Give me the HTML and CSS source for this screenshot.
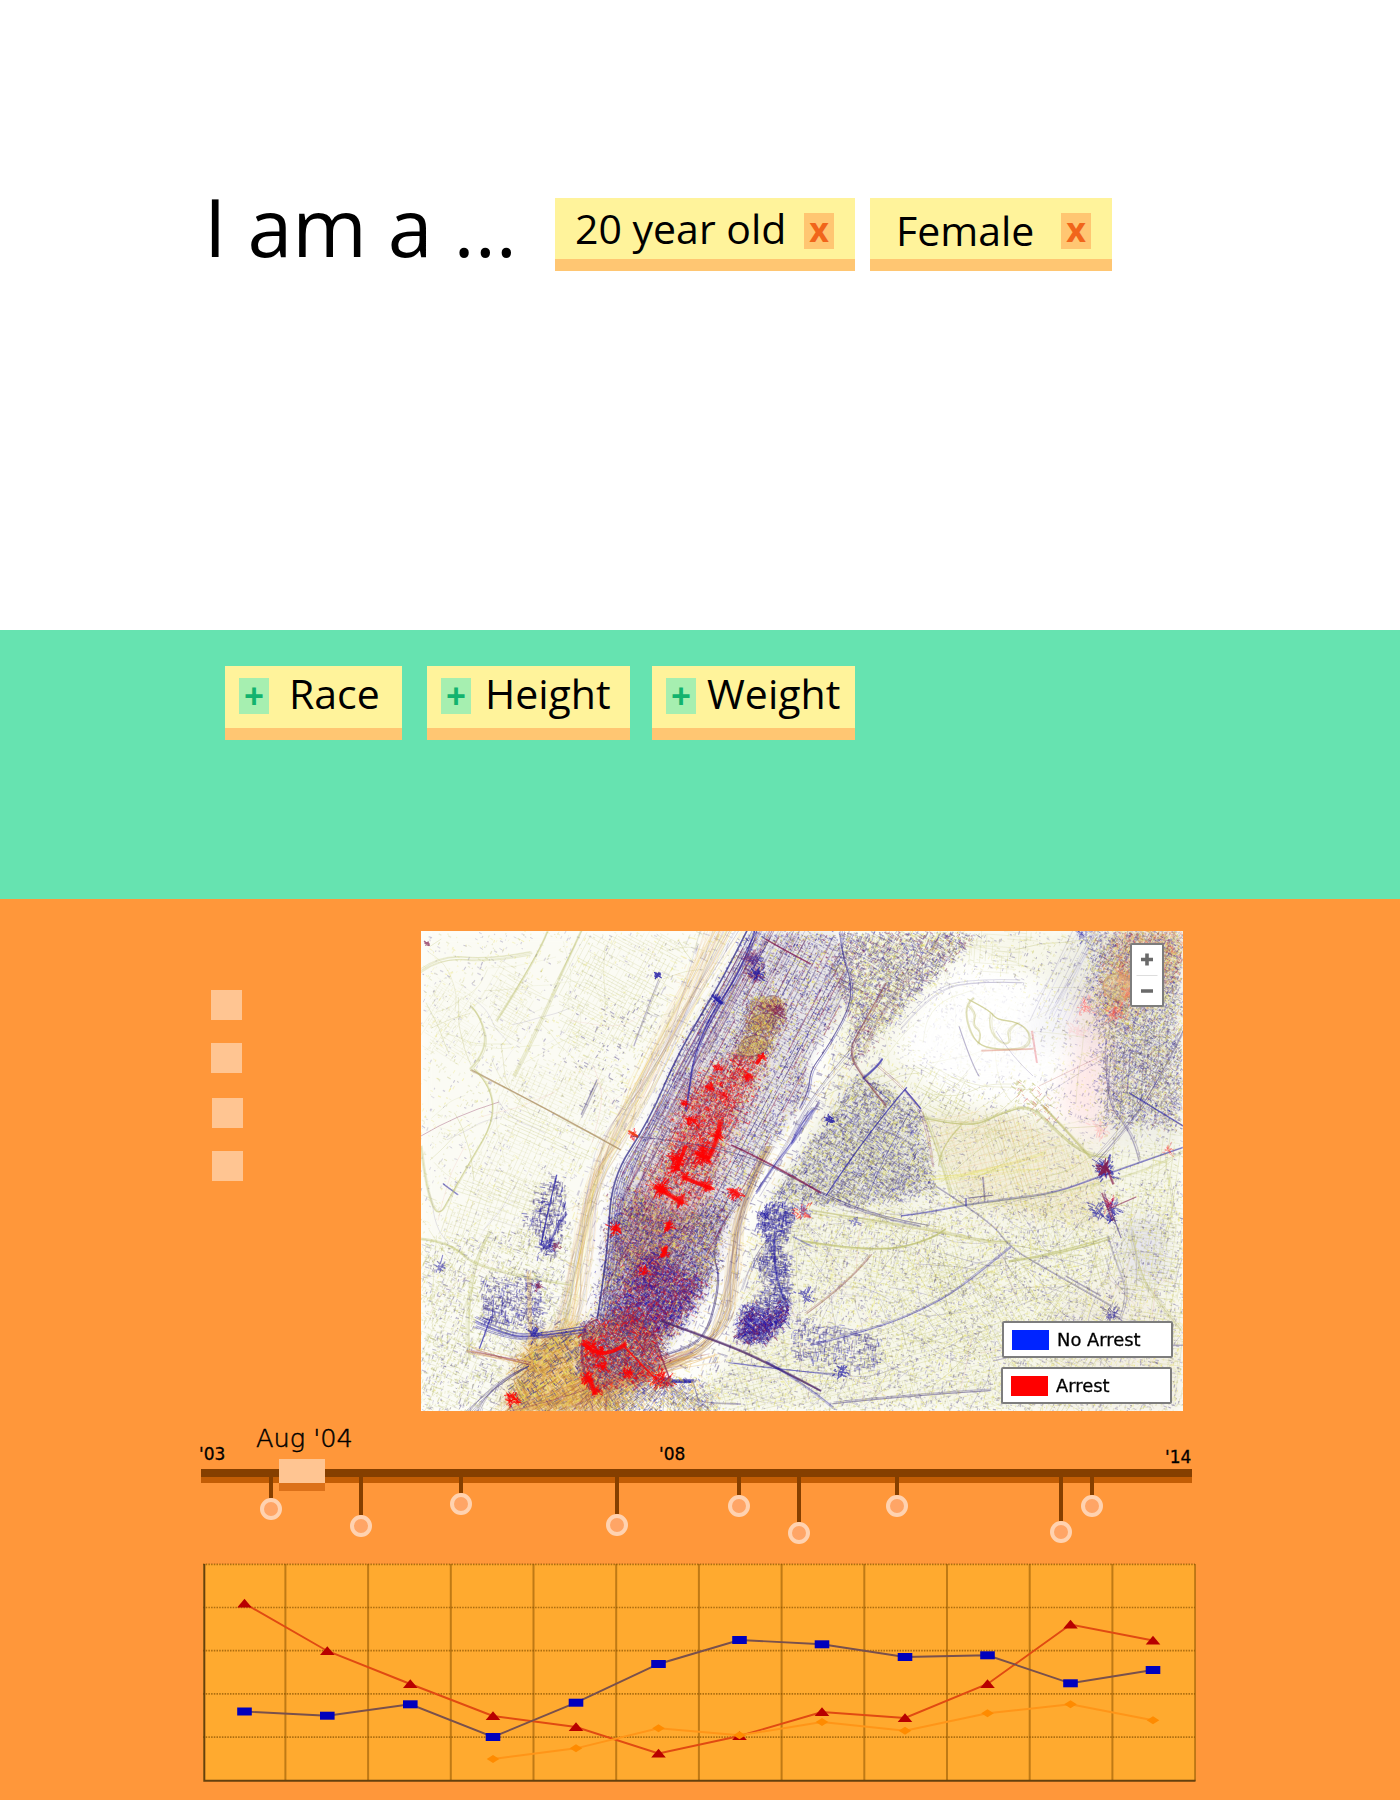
FILE: index.html
```html
<!DOCTYPE html>
<html lang="en">
<head>
<meta charset="utf-8">
<title>I am a ...</title>
<link rel="stylesheet" href="styles.css">
</head>
<body>
<section class="hero">
  <h1 class="title">I am a ...</h1>
  <div class="tag tag-age"><span class="tag-label">20 year old</span><button class="remove">x</button></div>
  <div class="tag tag-sex"><span class="tag-label">Female</span><button class="remove">x</button></div>
</section>
<section class="options">
  <div class="tag option race"><button class="add">+</button><span class="tag-label">Race</span></div>
  <div class="tag option height"><button class="add">+</button><span class="tag-label">Height</span></div>
  <div class="tag option weight"><button class="add">+</button><span class="tag-label">Weight</span></div>
</section>
<section class="explore">
  <div class="explore-top">
    <div class="filters"><i></i><i></i><i class="inset"></i><i class="inset"></i></div>
    <div class="map">
      <canvas id="map" width="762" height="480"></canvas>
      <div class="zoom">
        <svg width="29" height="60" viewBox="0 0 29 60"><path d="M9 14.5h12M15 8.500v12M9 46h12" stroke="#6a6a6a" stroke-width="3.600"/><path d="M4.500 30.500h21" stroke="#ddd"/></svg>
      </div>
      <div class="legend">
        <div class="key"><i class="swatch blue"></i>No Arrest</div>
        <div class="key second"><i class="swatch red"></i>Arrest</div>
      </div>
    </div>
  </div>
  <div class="years">
    <span class="y03">'03</span><span class="current">Aug '04</span><span class="y08">'08</span><span class="y14">'14</span>
  </div>
  <div class="timeline">
    <div class="pin" style="left:59px;height:43px"></div>
    <div class="pin" style="left:149px;height:60px"></div>
    <div class="pin" style="left:249px;height:38px"></div>
    <div class="pin" style="left:405px;height:59px"></div>
    <div class="pin" style="left:527px;height:40px"></div>
    <div class="pin" style="left:587px;height:67px"></div>
    <div class="pin" style="left:685px;height:40px"></div>
    <div class="pin" style="left:849px;height:66px"></div>
    <div class="pin" style="left:880px;height:40px"></div>
    <div class="handle"></div>
  </div>
  <svg class="chart" id="chart" width="994" height="219" viewBox="202 1563 994 219"></svg>
</section>
<script src="chart.js"></script>
<script src="map.js"></script>
</body>
</html>
```
FILE: styles.css
```css
*, *::after { box-sizing: border-box; }
body { margin: 0; width: 1400px; background: #fff; color: #000; font-family: "Open Sans", sans-serif; }
button { border: 0; padding: 0; font-family: "Open Sans", sans-serif; font-weight: 700; }

.hero { display: flex; align-items: flex-start; height: 630px; padding: 190px 0 0 204px; }
.title { margin: 0; width: 351px; font-size: 80.600px; font-weight: 400; line-height: 73px; white-space: nowrap; }

.tag { display: flex; align-items: flex-start; height: 73px; background: #fff39b; border-bottom: 12px solid #ffc672; }
.tag-label { font-size: 41px; line-height: 61px; white-space: nowrap; }
.hero .tag { margin-top: 8px; justify-content: space-between; padding: 0 21px 0 20px; }
.hero .tag-age { width: 300px; }
.hero .tag-sex { width: 242px; margin-left: 15px; padding-left: 26px; }
.tag-sex .tag-label { padding-top: 2px; }
.remove, .add { flex: none; width: 30px; height: 36px; }
.remove { margin-top: 15px; background: #ffc672; color: #f1651b; font-size: 34px; line-height: 26px; padding-bottom: 5px; }

.options { display: flex; align-items: flex-start; height: 269px; padding: 36px 0 0 225px; background: #66e3b0; }
.option { height: 74px; padding-left: 14px; }
.option .tag-label { line-height: 55px; }
.add { margin-top: 12px; background: #a6efb0; color: #12b36e; font-size: 35px; line-height: 36px; }
.race { width: 177px; }
.race .tag-label { margin-left: 20px; }
.height { width: 203px; margin-left: 25px; }
.height .tag-label { margin-left: 14px; }
.weight { width: 203px; margin-left: 22px; }
.weight .tag-label { margin-left: 11px; }

.explore { height: 901px; padding-top: 32px; background: #ff973a; font-family: "DejaVu Sans", sans-serif; }
.explore-top { display: flex; height: 480px; }
.filters { width: 421px; padding: 59px 0 0 211px; }
.filters i { display: block; width: 31px; height: 30px; margin-bottom: 23px; background: #ffc592; }
.filters i:nth-child(2) { margin-bottom: 25px; }
.filters .inset { margin-left: 1px; }

.map { position: relative; width: 762px; height: 480px; background: #fefefb; }
.map canvas { display: block; }
.zoom { position: absolute; left: 709px; top: 12px; width: 34px; height: 64px; background: #fff; border: 2px solid #7d7d7d; border-radius: 2px; }
.zoom svg { display: block; }
.legend { position: absolute; left: 580px; top: 390px; }
.key { display: flex; align-items: center; width: 171px; height: 37px; margin-left: 1px; padding-left: 8px; background: #fff; border: 2px solid #7d7d7d; border-radius: 2px; font-size: 17.900px; -webkit-text-stroke: .3px #000; }
.key.second { margin: 9px 0 0; }
.swatch { width: 37px; height: 20px; margin-right: 8px; }
.blue { background: #0024ff; }
.red { background: #f00; }

.years { display: flex; align-items: flex-start; height: 58px; padding: 12px 0 0 199px; font-size: 17px; line-height: 20px; white-space: nowrap; -webkit-text-stroke: .3px #000; }
.y03 { width: 57px; padding-top: 21px; }
.current { width: 403px; font-size: 25.600px; font-weight: 200; line-height: 30px; -webkit-text-stroke: .5px #000; }
.y08 { width: 506px; padding-top: 21px; }
.y14 { padding-top: 24px; }

.timeline { position: relative; width: 991px; height: 14px; margin-left: 201px; background: #c25d05; border-top: 8px solid #853f00; }
.pin { position: absolute; top: 0; width: 22px; border-bottom: 22px solid transparent; background: linear-gradient(#853f00, #853f00) 9px 0 / 4px 100% no-repeat padding-box; }
.pin::after { content: ""; position: absolute; left: 0; top: 100%; width: 22px; height: 22px; border: 4px solid #ffd2b0; border-radius: 50%; background: #ffa566; }
.handle { position: absolute; left: 78px; top: -18px; width: 46px; height: 32px; background: #ffc592; border-bottom: 8px solid #dc7119; }

.chart { display: block; margin: 80px 0 0 202px; }
.panel { fill: #ffaa2f; }
.grid-x { stroke: #8a5200; stroke-opacity: .55; stroke-width: 2; }
.grid-y { stroke: #8a5200; stroke-opacity: .7; stroke-dasharray: 1.500 1.200; stroke-width: 1.700; }
.axis { fill: none; stroke: #65400e; stroke-width: 2; }
.series { fill: none; stroke-width: 1.900; }
.s-red { stroke: #e04a12; }
.s-blue { stroke: #79504c; }
.s-amber { stroke: #ff9518; }
.m-red { fill: #b80000; }
.m-blue { fill: #0000bd; }
.m-amber { fill: #ff8b00; }
```
FILE: chart.js
```js
// Trend chart
(function () {
  const xs = [244.5, 327.3, 410.3, 493, 576, 658.5, 739.5, 822, 905, 987.5, 1070.5, 1153];
  const red = [1603.5, 1651, 1684, 1716, 1727, 1753.5, 1736, 1712, 1718, 1684, 1624.5, 1640.5];
  const blue = [1711.5, 1715.7, 1704.3, 1737, 1702.7, 1664, 1640, 1644.3, 1657, 1655.3, 1683.3, 1670];
  const amber = [null, null, null, 1759, 1748.3, 1728.3, 1735.3, 1722, 1730.7, 1713.3, 1704.3, 1720.3];
  let g = '<rect class="panel" x="203" y="1564" width="992.5" height="217"/>';
  for (let i = 1; i <= 12; i++) { const x = 202.7 + i * 82.7; g += `<path class="grid-x" d="M${x} 1564V1781"/>`; }
  for (let i = 0; i < 5; i++) { const y = 1564.3 + i * 43.2; g += `<path class="grid-y" d="M203 ${y}H1195"/>`; }
  g += '<path class="axis" d="M204.3 1564V1780.7H1195.5"/>';
  function series(ys, name, mark) {
    const pts = xs.map((x, i) => [x, ys[i]]).filter(p => p[1] !== null);
    g += `<polyline class="series s-${name}" points="${pts.map(p => p.join(',')).join(' ')}"/>`;
    pts.forEach(([x, y]) => { g += `<path class="m-${name}" d="M${x} ${y}${mark}"/>`; });
  }
  series(red, 'red', 'm0-4.7l7.3 8.7h-14.6z');
  series(blue, 'blue', 'm-7.3-4h14.6v8h-14.6z');
  series(amber, 'amber', 'm0-4l6.3 4l-6.3 4l-6.3-4z');
  document.getElementById('chart').innerHTML = g;
})();
```
FILE: map.js
```js
// Map of stops: street grids, travelled roads and point density
(function () {
const c = document.getElementById('map').getContext('2d');
let seed = 41;
function rnd() { seed = (seed * 1664525 + 1013904223) % 4294967296; return seed / 4294967296; }
const sp = () => rnd() + rnd() - 1;
const B = '35,28,165', N = '75,62,130', Y = '228,220,70', O = '186,188,105', R = '255,0,0', M = '130,30,80', G = '228,172,75';
function trace(p) { c.beginPath(); p.forEach((q, i) => i ? c.lineTo(q[0], q[1]) : c.moveTo(q[0], q[1])); }
function curve(p) {
  if (p.length < 3) { trace(p); return; }
  c.beginPath(); c.moveTo(p[0][0], p[0][1]);
  for (let i = 1; i < p.length - 1; i++) {
    const a = p[i], b = p[i + 1], last = i === p.length - 2;
    c.quadraticCurveTo(a[0], a[1], last ? b[0] : (a[0] + b[0]) / 2, last ? b[1] : (a[1] + b[1]) / 2);
  }
}
// Short segments are collected per colour and stroked a few dozen at a time
const pool = {};
function flush(col) {
  const q = pool[col];
  if (!q || !q.s.length) return;
  c.beginPath();
  for (const s of q.s) { c.moveTo(s[0], s[1]); c.lineTo(s[2], s[3]); }
  c.strokeStyle = `rgba(${col},${q.a * (.5 + rnd() * .6)})`; c.lineWidth = q.w * (.8 + rnd() * .4); c.stroke();
  q.s = [];
}
function seg(col, a, w, x0, y0, x1, y1) {
  const q = pool[col] || (pool[col] = { s: [] });
  q.a = a; q.w = w; q.s.push([x0, y0, x1, y1]);
  if (q.s.length >= 36) flush(col);
}
function flushAll() { Object.keys(pool).forEach(flush); }
// A road is a bundle of thin tracks that wander round the same line
function road(p, col, a, w, n = 1, spread = 0) {
  const m = n + (w > 1.2 ? 1 : 0), f = w > 1.2 ? .62 : .8;
  for (let k = 0; k < m; k++) {
    const s = spread || (w > 1.2 ? .6 : 0), dx = sp() * s, dy = sp() * s;
    curve(p.map(q => [q[0] + dx + sp() * s * .5, q[1] + dy + sp() * s * .5]));
    c.strokeStyle = `rgba(${col},${a * f})`; c.lineWidth = w * .75; c.stroke();
  }
}
function inside(p, x, y) {
  let r = false;
  for (let i = 0, j = p.length - 1; i < p.length; j = i++)
    if ((p[i][1] > y) !== (p[j][1] > y) && x < (p[j][0] - p[i][0]) * (y - p[i][1]) / (p[j][1] - p[i][1]) + p[i][0]) r = !r;
  return r;
}
function box(p) {
  const X = p.map(q => q[0]), Z = p.map(q => q[1]);
  return [Math.min(...X), Math.min(...Z), Math.max(...X), Math.max(...Z)];
}
function tint(p, col, a, blur = 8) { c.save(); c.filter = `blur(${blur}px)`; trace(p); c.closePath(); c.fillStyle = `rgba(${col},${a})`; c.fill(); c.restore(); }
function hatch(p, deg, gap, col, a, w = .7, broken = .25) {
  const [x0, y0, x1, y1] = box(p), L = Math.hypot(x1 - x0, y1 - y0) / 2, mx = (x0 + x1) / 2, my = (y0 + y1) / 2;
  const t = deg * Math.PI / 180, cs = Math.cos(t), sn = Math.sin(t);
  for (let v = -L; v < L; v += gap * (.8 + rnd() * .4)) {
    for (let u = -L; u < L;) {
      const l = 8 + rnd() * 22, X = mx + u * cs - v * sn, Z = my + u * sn + v * cs;
      if (rnd() > broken && inside(p, X, Z) && inside(p, X + l * .7 * cs, Z + l * .7 * sn)) seg(col, a, w, X, Z, X + l * cs, Z + l * sn + sp() * .6);
      u += l;
    }
  }
  flushAll();
}
function grid(p, deg, gap, col, a, w) { hatch(p, deg, gap, col, a, w); hatch(p, deg + 90, gap * 1.4, col, a, w); }
// Speck edges are feathered so that neighbouring densities run into each other
function specks(p, n, cols, deg, len, a, soft = 7) {
  const [x0, y0, x1, y1] = box(p);
  for (let i = 0; i < n; i++) {
    const x = x0 + rnd() * (x1 - x0), y = y0 + rnd() * (y1 - y0);
    if (!inside(p, x + sp() * soft, y + sp() * soft)) continue;
    const t = (deg + (rnd() < .5 ? 90 : 0) + sp() * 10) * Math.PI / 180, l = len * (.3 + rnd());
    seg(cols[Math.floor(rnd() * cols.length)], a, 1.1, x, y, x + Math.cos(t) * l, y + Math.sin(t) * l);
  }
  flushAll();
}
function blob(x, y, r, col, n, a = .8) {
  for (let i = 0; i < n * .6; i++) {
    const t = (28 + Math.floor(rnd() * 4) * 90 + sp() * 25) * Math.PI / 180, d = r * .9 * rnd() * rnd(), l = 1 + rnd() * r * .4;
    const X = x + Math.cos(t) * d + sp() * r * .45, Z = y + Math.sin(t) * d + sp() * r * .45;
    seg(col, a, 1.1, X, Z, X + Math.cos(t) * l, Z + Math.sin(t) * l);
  }
  flushAll();
}
function tangle(p, n, col, a, len) {
  const [x0, y0, x1, y1] = box(p);
  for (let i = 0; i < n; i++) {
    let x = x0 + rnd() * (x1 - x0), y = y0 + rnd() * (y1 - y0), t = rnd() * 6.28; const q = [[x, y]];
    for (let k = 0; k < 5; k++) { t += sp() * .5; x += Math.cos(t) * len / 5; y += Math.sin(t) * len / 5; if (inside(p, x, y)) q.push([x, y]); else break; }
    if (q.length > 1) road(q, col, a * (.3 + rnd()), .9);
  }
}

const all = [[0, 0], [762, 0], [762, 480], [0, 480]];
const jersey = [[0, 0], [300, 0], [250, 110], [205, 200], [180, 230], [165, 300], [150, 390], [100, 480], [0, 480]];
const jerseyS = [[0, 310], [150, 290], [150, 400], [90, 480], [0, 480]];
const hudson = [[265, 0], [325, 0], [240, 150], [192, 250], [176, 390], [110, 480], [80, 480], [140, 390], [158, 250], [195, 180]];
const east = [[430, 0], [762, 0], [762, 480], [240, 480], [300, 440], [335, 300], [380, 215], [410, 140], [420, 60]];
const eastRiver = [[390, 140], [410, 100], [440, 130], [400, 200], [345, 270], [340, 390], [300, 440], [250, 450], [262, 410], [300, 350], [300, 290], [330, 250]];
const queensW = [[385, 215], [440, 140], [500, 180], [515, 260], [430, 275], [345, 270]];
const south = [[350, 270], [762, 250], [762, 480], [250, 480], [320, 400]];
const queensMid = [[500, 185], [600, 175], [680, 230], [690, 300], [540, 275], [515, 210]];
const manhattan = [[328, 0], [305, 40], [262, 110], [240, 160], [222, 205], [192, 250], [187, 320], [176, 388], [163, 392], [158, 440], [175, 462], [205, 442], [262, 398], [290, 345], [300, 300], [325, 262], [350, 215], [388, 165], [388, 125], [415, 90], [430, 50], [415, 0]];
const midtown = [[322, 120], [348, 122], [325, 175], [305, 215], [290, 262], [258, 320], [225, 360], [195, 320], [222, 255], [248, 215], [270, 155]];
const downtown = [[190, 290], [215, 260], [255, 290], [310, 265], [292, 350], [250, 400], [228, 450], [160, 440], [165, 392], [180, 388]];
const harbor = [[170, 390], [108, 410], [82, 480], [190, 480], [225, 450], [190, 460], [160, 440], [163, 395]];
const bronx = [[420, 0], [560, 0], [500, 60], [450, 110], [430, 140], [428, 80], [410, 40]];
const ne = [[655, 0], [762, 0], [762, 210], [680, 215], [680, 120], [640, 110], [600, 120]];

tint(jersey, '220,223,170', .08); tint(east, '220,220,170', .2); tint(queensMid, '225,205,150', .2);
tint(queensW, '170,170,190', .15); tint(manhattan, '150,140,165', .22, 5);
tint([[560, 20], [520, 40], [470, 120], [520, 165], [640, 190], [680, 205], [690, 120], [640, 60]], '255,255,255', .9, 10);
tint([[665, 60], [690, 50], [690, 130], [680, 215], [640, 180], [650, 120]], '255,165,165', .24, 12);
tint([[690, 0], [762, 0], [750, 60], [690, 90]], '225,180,130', .35, 9);
tint([[700, 290], [740, 290], [745, 350], [705, 350]], '180,175,240', .25, 10);
tint([[640, 370], [700, 340], [762, 390], [762, 480], [620, 480]], '235,225,215', .3, 10);

// pale outer boroughs
grid([[0, 40], [70, 60], [55, 130], [0, 130]], 33, 3, O, .25);
grid([[80, 25], [120, 60], [95, 110], [70, 110], [60, 60]], 30, 3, O, .3);
grid([[160, 0], [270, 0], [225, 115], [140, 125], [130, 60]], 28, 3.3, O, .36);
grid([[80, 130], [200, 120], [185, 200], [130, 290], [40, 260], [75, 180]], 24, 3.6, O, .32);
grid([[20, 250], [150, 240], [130, 330], [20, 310]], 18, 4, O, .33);
grid(jerseyS, 25, 6, O, .25);
tangle(jersey, 90, O, .45, 70); tangle(jersey, 35, N, .22, 60); tangle(jersey, 20, '230,140,140', .25, 80);
grid(bronx, 30, 5, O, .35); grid(queensW, 32, 4.5, O, .4);
grid([[470, 118], [560, 150], [540, 190], [490, 175]], 28, 4, O, .4);
grid([[540, 0], [620, 0], [590, 45], [550, 40]], 4, 4, O, .33);
grid(queensMid, 70, 3.6, O, .38); grid(queensMid, 78, 5, '235,165,100', .25);
grid([[345, 275], [520, 275], [530, 350], [400, 360], [340, 330]], 10, 4, O, .36);
grid([[520, 285], [690, 295], [700, 370], [600, 330], [500, 390]], 75, 4, O, .36);
grid([[480, 330], [620, 330], [600, 420], [450, 410]], -28, 4, O, .36);
grid([[620, 340], [700, 360], [690, 480], [560, 480]], 30, 3.6, O, .4);
grid([[330, 400], [580, 390], [580, 480], [260, 480]], -15, 4.5, O, .36);
grid([[690, 220], [762, 190], [762, 480], [700, 420]], 8, 4, O, .38);
tangle(east, 200, O, .5, 80); tangle(south, 170, N, .35, 60); tangle(south, 80, Y, .4, 70); tangle(south, 50, '220,150,150', .35, 60);
specks(all, 5000, [O, Y, N, O], 28, 3, .25);
specks(east, 11000, [N, Y, O, N, O], 20, 3, .32);
specks(south, 9000, [O, N, Y], 12, 3, .36);
specks(jersey, 2600, [O, N, Y, O], 28, 3, .32);
specks(jerseyS, 2400, [N, O, O], 20, 4, .38);
specks(queensW, 8000, [B, N, Y, O, N], 30, 3.5, .42); specks(bronx, 7500, [B, N, Y, M, N, O], 28, 3.5, .42);
grid(queensW, 32, 12, N, .38); grid(bronx, 30, 10, N, .38); tangle(queensW, 30, N, .4, 60); tangle(bronx, 35, N, .4, 60);
tint([[555, 45], [510, 75], [485, 110], [520, 145], [620, 150], [660, 120], [610, 115], [620, 65]], '255,255,255', .75, 10);
road([[547, 68], [568, 78], [575, 88], [596, 90], [610, 102], [606, 117], [575, 118], [555, 112], [545, 90], [545, 72], [553, 66]], O, .5, 1.5, 2, 2);
road([[548, 75], [556, 82], [552, 95], [562, 102], [558, 113]], O, .5, 1.4, 2, 2);
road([[570, 82], [567, 98], [580, 113], [590, 112], [585, 98], [597, 92]], O, .45, 1.4, 2, 2);
road([[480, 95], [512, 57], [560, 48], [600, 50]], N, .3, 1.3, 2, 3); road([[538, 95], [550, 132], [558, 145]], N, .35, 1.5); road([[575, 100], [590, 125], [612, 145]], N, .3, 1.2);
road([[560, 120], [612, 118]], '220,130,110', .5, 1.3, 2, 1); road([[611, 100], [616, 132]], '230,100,110', .6, 1.4); road([[618, 155], [680, 125]], '190,110,110', .4, 1.2); road([[630, 160], [678, 130]], N, .3, 1);

// rivers with ferry tracks
specks(hudson, 2600, [Y, G, N, O, N], 112, 7, .28); specks(eastRiver, 2600, [N, G, N, Y], 112, 6, .36);
for (let i = 0; i < 60; i++) road([[300 + sp() * 26, 0], [235 + sp() * 26, 130], [195 + sp() * 20, 205], [172 + sp() * 12, 250], [161 + sp() * 16, 320], [150 + sp() * 20, 390], [125 + sp() * 32, 430], [100 + sp() * 34, 480]], [G, Y, '220,150,120', N, G][i % 5], .24, .9);
for (let i = 0; i < 45; i++) road([[348 + sp() * 8, 215], [318 + sp() * 11, 275], [312 + sp() * 14, 340], [305 + sp() * 14, 390], [280 + sp() * 15, 418], [235 + sp() * 18, 440], [150 + sp() * 55, 480]], i % 3 ? G : N, .28, .9);
road([[325, 260], [298, 295], [292, 325], [300, 345], [288, 400], [265, 418], [235, 425]], N, .65, 1.3, 3, 2);
tint(harbor, '222,155,35', .4, 9);
specks(harbor, 5000, [G, Y, '190,120,50', N, G], -35, 6, .6, 14);
for (let i = 0; i < 80; i++) road([[82 + rnd() * 105, 480], [135 + rnd() * 65, 455 + sp() * 8], [170 + rnd() * 130, 425 + sp() * 14]], [G, G, '215,150,40', M][i % 4], .45, .9);

// Manhattan
const mh = 118;
hatch(manhattan, mh, 6, N, .6, 1); hatch(manhattan, mh - 90, 3.4, N, .42, .8);
specks(manhattan, 24000, [B, N, Y, Y, N, '255,255,235', M], mh, 2.6, .5);
for (let i = 0; i < 22; i++) { const k = rnd() * 70; road([[330 + k, 0], [262 + k, 125], [200 + k * .9, 245], [188 + k * .9, 300]], i % 3 ? N : M, .4, .9); }
specks([[330, 65], [367, 75], [345, 130], [310, 130], [325, 100]], 3200, [G, N, Y, M, '190,140,70'], 118, 2.8, .5);
tint(midtown, '205,85,80', .2, 9);
specks(midtown, 11000, [R, '215,30,40', M, N, G, Y], mh, 2.8, .5, 14);
specks([[318, 125], [342, 125], [322, 165], [300, 210], [285, 235], [240, 252], [262, 190], [285, 150]], 4300, [R, '225,20,20', R, M], mh, 3, .55, 18);
tint(downtown, '75,40,145', .13, 10);
specks(downtown, 17000, [B, N, N, M, Y, G], mh, 2.8, .5, 15);
specks([[225, 320], [285, 355], [245, 405], [205, 400], [190, 380]], 5000, ['30,10,185', M, B, '200,10,40'], 30, 3.2, .5, 16);
specks([[165, 395], [215, 375], [245, 420], [228, 450], [175, 460], [158, 440]], 3600, [R, M, G, R, N, '120,60,90'], 38, 4, .55, 8);
hatch(manhattan, mh, 13, M, .5, 1.1);
for (let k = 0; k < 6; k++) road([[326 + k * 5, 0], [302 + k * 4, 48], [258 + k * 4, 120], [228 + k * 3, 190], [190 + k * 2, 248], [187 + k * 3, 320], [176 + k * 3, 388]], k < 2 ? '35,30,130' : B, .75 - k * .09, k ? 1 : 2);
road([[335, 0], [322, 40], [290, 85], [272, 130], [269, 160], [265, 180]], B, .75, 1.5, 2, 2);
road([[176, 388], [163, 390], [158, 435], [170, 460]], M, .7, 1.5, 2, 2);
[[332, 115, 15, 10], [341, 91, 14, 8], [350, 72, 10, 7]].forEach(([x, y, w, h]) => { c.beginPath(); c.ellipse(x, y, w, h, -.3, 0, 7); c.fillStyle = 'rgba(222,195,110,.35)'; c.fill(); c.strokeStyle = 'rgba(110,60,80,.45)'; c.lineWidth = 1.3; c.stroke(); specks([[x - 12, y - 7], [x + 12, y - 7], [x + 12, y + 7], [x - 12, y + 7]], 260, [N, G, Y, M], 30, 2.5, .5); });
[[341, 126, 5], [328, 145, 6], [296, 137, 6], [289, 157, 5], [303, 165, 6], [270, 189, 6], [264, 172, 5], [296, 205, 8], [281, 226, 11], [283, 217, 7], [256, 228, 10], [254, 237, 7], [241, 257, 9], [286, 255, 10], [264, 246, 6], [313, 262, 9], [260, 270, 8], [238, 258, 10], [248, 295, 7], [243, 321, 6], [223, 340, 6], [194, 298, 7], [170, 415, 10], [179, 423, 9], [181, 435, 8], [207, 442, 8], [166, 448, 9], [175, 459, 7], [238, 449, 13], [246, 450, 9], [92, 468, 9], [212, 203, 5]].forEach(q => blob(q[0], q[1], q[2], R, 15 * q[2]));
[[[299, 190], [296, 210], [287, 228]], [[265, 215], [256, 238]], [[235, 255], [262, 272]], [[262, 246], [290, 257]], [[249, 292], [245, 300]], [[244, 315], [242, 325]], [[274, 222], [288, 229]], [[339, 128], [336, 133]], [[328, 143], [325, 148]], [[162, 412], [180, 432], [205, 412]], [[168, 445], [174, 463]]].forEach(p => road(p, R, .8, 4.6, 2, 1.5));
road([[203, 415], [236, 449]], R, .8, 1.6, 2, 1); road([[208, 200], [217, 206]], '235,60,10', .8, 3);
blob(334, 45, 9, M, 100); blob(331, 28, 12, M, 160, .6); blob(334, 28, 12, B, 110, .5); blob(336, 44, 11, B, 100); blob(355, 80, 12, M, 130, .5); road([[291, 64], [301, 73]], B, .8, 3.5); blob(296, 68, 6, B, 60); blob(237, 44, 4, B, 60);
road([[345, 8], [365, 20], [390, 33]], M, .7, 1.6, 2, 1);

// bridges, expressways and local clusters
road([[50, 139], [110, 170], [165, 200], [200, 219]], '170,140,95', .7, 1.6, 2, 1);
road([[210, 205], [310, 214], [400, 262], [460, 286], [508, 294]], N, .5, 1.3, 1, 1);
road([[310, 214], [350, 232], [400, 262]], M, .8, 1.8, 2, 1);
road([[240, 390], [290, 408], [340, 428], [400, 460]], '70,30,100', .8, 2, 2, 1);
road([[232, 400], [240, 425], [252, 455]], M, .65, 1.6, 2, 1);
for (let i = 0; i < 4; i++) road([[55, 386 + i * 3], [85, 401 + i * 2], [112, 405 + i], [165, 395 + i * 2]], B, .65, 1.3, 1, 1.5);
road([[70, 385], [58, 418]], B, .75, 1.5);
hatch([[60, 350], [82, 350], [88, 395], [60, 390]], 95, 5, B, .6, 1.3); hatch([[58, 365], [85, 375], [85, 400], [58, 390]], 15, 5, B, .5, 1.2);
specks([[60, 350], [120, 345], [122, 400], [60, 390]], 700, [B, N], 15, 4, .5);
const port = [[135, 242], [146, 255], [146, 285], [135, 320], [121, 326], [120, 300], [103, 295], [115, 265]];
specks(port, 800, [B, N, N], 98, 4.5, .55); road([[136, 244], [127, 280], [120, 315]], B, .8, 1.6); road([[145, 283], [134, 295], [128, 318]], B, .6, 1.6, 2, 2); blob(126, 316, 9, B, 110); blob(135, 315, 5, M, 40);
specks([[155, 80], [240, 60], [200, 170], [160, 190]], 240, [N, O], 118, 4, .4);
road([[238, 48], [222, 90], [212, 115]], N, .35, 1.3, 2, 2); road([[176, 150], [160, 185]], N, .5, 1.6, 2, 2);
road([[0, 205], [35, 184], [78, 171]], M, .45, 1.2); road([[22, 253], [37, 264]], B, .5, 1.8); blob(19, 335, 9, B, 55); blob(7, 13, 3, M, 30);
[[[50, 139], [68, 120], [60, 85], [50, 75]], [[53, 138], [85, 169], [38, 250], [10, 300], [0, 215]], [[137, 50], [160, 0]], [[137, 50], [115, 100], [92, 145]], [[126, 0], [117, 25], [75, 90]], [[0, 308], [28, 310], [60, 340], [150, 353]], [[48, 430], [42, 345], [70, 300]], [[0, 40], [20, 25], [70, 30], [110, 22]]].forEach(p => road(p, O, .42, 1.4, 3, 2));
for (let i = 0; i < 10; i++) road([[50 + sp() * 8, 420 + sp() * 6], [110, 434 + sp() * 5]], i % 2 ? G : M, .5, 1);
for (let i = 0; i < 8; i++) road([[45 + i * 2, 480], [70, 455 + sp() * 8], [108, 435]], N, .5, 1);
road([[108, 340], [110, 438]], G, .35, 1.8, 4, 4); blob(117, 355, 6, M, 45); blob(113, 402, 8, B, 80);

for (let i = 0; i < 4; i++) road([[418 + i * 2, 0], [420, 20], [432, 52], [428, 80], [405, 120], [390, 140], [389, 160], [379, 178]], i % 2 ? N : B, .5, 1.2, 1, 2);
road([[467, 52], [443, 95], [429, 118], [437, 140], [466, 175]], '130,60,80', .55, 1.5, 3, 3);
road([[515, 15], [475, 60], [450, 100], [442, 125]], '190,150,120', .45, 1.3, 3, 5);
road([[454, 132], [495, 165], [507, 200], [512, 235]], M, .35, 1.2, 2, 2);
road([[430, 118], [390, 165], [360, 225], [335, 262]], N, .4, 1, 4, 5);
road([[398, 170], [380, 200], [348, 240], [335, 262]], B, .5, 1.6, 2, 2);
road([[392, 178], [379, 192], [370, 212]], B, .45, 1.4, 4, 3);
road([[442, 148], [458, 135], [462, 128]], B, .8, 2.4, 1, 1); road([[443, 148], [470, 170]], B, .5, 1.3);
road([[486, 156], [448, 200], [405, 265]], B, .55, 1.5, 2, 1); road([[490, 180], [463, 225], [448, 265]], B, .4, 1.3, 1, 1);
road([[484, 159], [500, 178]], B, .7, 2); road([[445, 190], [495, 215]], B, .35, 1.1); road([[410, 188], [500, 250]], N, .45, 1.2, 1, 2); blob(408, 188, 6, B, 45);
road([[505, 187], [548, 197], [580, 182], [610, 173], [640, 205], [668, 226], [690, 226]], O, .55, 1.6, 3, 2);
road([[503, 182], [516, 210], [530, 263]], O, .55, 1.8, 2, 2); road([[540, 195], [520, 215], [518, 235]], O, .5, 1.4, 2, 1);
road([[480, 285], [510, 281], [545, 274], [590, 268], [635, 262], [685, 243], [762, 217]], B, .5, 1.4, 2, 1);
road([[390, 280], [450, 290], [500, 297], [580, 314], [590, 310]], O, .5, 1.6, 3, 2);
road([[400, 262], [440, 285], [500, 296]], N, .45, 1.3, 2, 2); road([[515, 255], [570, 290], [588, 315], [615, 332], [690, 374]], N, .45, 1.3, 2, 1);
road([[380, 310], [452, 322], [510, 310], [525, 298]], O, .6, 1.6, 3, 1);
road([[450, 323], [430, 350], [385, 382]], '145,85,80', .5, 1.4, 2, 2);
road([[390, 414], [455, 398], [520, 370], [560, 340], [590, 316]], B, .45, 1.4, 2, 1);
road([[588, 330], [640, 322], [690, 306]], O, .6, 1.7, 3, 2); road([[535, 275], [700, 260], [762, 220]], O, .35, 1.4, 2, 2);
road([[545, 275], [545, 267]], B, .7, 1.5); road([[547, 267], [572, 264]], N, .6, 1.4); road([[563, 245], [565, 270]], N, .4, 1.5, 2, 2);
for (let i = 0; i < 10; i++) road([[500, 250 + sp() * 14], [560, 240 + sp() * 14], [625, 228 + sp() * 14]], Y, .3, 1);
road([[620, 175], [645, 200], [670, 228]], O, .4, 2.5, 3, 2); specks([[590, 150], [610, 145], [640, 185], [620, 190]], 160, ['210,90,80', O], 40, 5, .6);

// north-east corner
tint(ne, '160,160,190', .1, 12);
for (let i = 0; i < 28; i++) { const k = sp() * 8; road([[655 + i * 3 + k, 0], [612 + i * 3 + k, 85 + sp() * 20]], i % 3 ? '130,125,215' : N, .26, 1); }
specks([[665, 0], [762, 0], [762, 200], [685, 190], [682, 110], [670, 70]], 9500, [N, B, Y, '190,130,110', O, N], 118, 3, .38, 16);
specks([[700, 0], [762, 0], [762, 30], [705, 85], [678, 75]], 2800, [G, Y, '240,120,100', M], 118, 3, .45, 18);
grid([[682, 100], [748, 100], [715, 185], [684, 180]], 4, 5, N, .38);
blob(694, 82, 12, '255,80,70', 120, .5); blob(663, 76, 11, '255,110,110', 70, .4); blob(680, 198, 11, '255,140,140', 70, .35); blob(708, 62, 9, '255,60,60', 80, .5); blob(662, 5, 9, B, 70, .6); blob(655, 100, 12, '255,160,160', 60, .35); blob(705, 48, 14, '240,120,90', 120, .35);
c.beginPath(); c.ellipse(697, 56, 15, 13, .3, 0, 7); c.fillStyle = 'rgba(225,200,130,.35)'; c.fill(); c.strokeStyle = 'rgba(190,140,90,.5)'; c.lineWidth = 1.5; c.stroke();
road([[685, 125], [685, 170], [705, 195], [715, 215], [718, 230]], N, .45, 1.4, 2, 2);
road([[762, 95], [735, 150], [705, 195], [675, 228]], N, .4, 1.3, 5, 5);
road([[708, 162], [762, 195]], B, .5, 1.6, 2, 1);
blob(683, 238, 14, B, 160, .7); blob(683, 238, 9, M, 110); blob(676, 280, 12, B, 80, .5); blob(690, 278, 11, B, 110, .6); blob(688, 272, 8, '200,0,50', 60); blob(690, 288, 6, B, 60); blob(747, 219, 8, R, 40, .5);
road([[684, 232], [693, 255]], M, .7, 2, 2, 2); road([[682, 262], [693, 290]], M, .6, 2, 2, 2); road([[685, 279], [715, 266]], M, .6, 1.5); road([[692, 285], [700, 307]], N, .6, 1.5);
road([[688, 305], [697, 335], [710, 365], [700, 390]], N, .3, 1.3, 3, 4); road([[712, 300], [715, 340], [740, 375], [762, 400]], O, .4, 1.5, 3, 3);
blob(690, 382, 13, N, 90, .5); blob(691, 385, 7, B, 40);

// Brooklyn waterfront
const wil = [[345, 270], [375, 275], [365, 305], [350, 320], [335, 290]];
specks(wil, 1000, [B, N, B], 10, 4, .5); blob(381, 281, 10, R, 60, .5); blob(382, 278, 10, B, 50, .6); blob(342, 284, 8, B, 60);
const navy = [[352, 310], [368, 330], [370, 375], [345, 412], [315, 408], [316, 385], [345, 355], [333, 330]];
specks(navy, 2400, [B, N, B, N], 10, 4, .45);
const core = [[325, 375], [345, 382], [366, 368], [368, 385], [335, 412], [315, 405]];
specks(core, 1500, [B, '20,0,180', M], 55, 4, .55, 10); tint(core, '40,20,190', .1, 7);
road([[355, 300], [352, 345], [365, 370]], B, .5, 1.6, 3, 2); road([[345, 310], [330, 325], [320, 360]], N, .4, 1.3, 2, 3);
road([[372, 305], [392, 315]], B, .4, 1.3, 2, 2); blob(385, 365, 9, B, 60, .7); blob(434, 291, 8, B, 35, .6);
specks([[370, 385], [462, 405], [455, 440], [370, 430]], 700, [B, N], 4, 4.5, .45); blob(420, 441, 9, B, 60);
road([[310, 430], [360, 438], [420, 443]], B, .4, 1.2, 3, 4); road([[250, 450], [272, 450]], B, .8, 3, 3, 2); road([[272, 450], [276, 465], [278, 472], [320, 473]], N, .5, 1.5);
for (let i = 0; i < 26; i++) road([[245 + sp() * 8, 448 + sp() * 4], [190 + i * 4, 480]], [N, B, G, O][i % 4], .42, 1);
specks([[215, 445], [275, 445], [300, 480], [185, 480]], 1500, [N, G, B, Y], 50, 4, .4, 12);
road([[412, 472], [500, 463], [570, 459]], N, .5, 1.5, 2, 1); road([[345, 430], [380, 450], [412, 476]], B, .4, 1.5, 2, 2);
road([[645, 345], [680, 365]], N, .5, 1.5); road([[570, 430], [620, 418], [762, 415]], N, .3, 1.2, 3, 4);
})();
```
